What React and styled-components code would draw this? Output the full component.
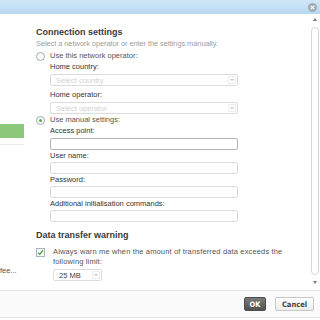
import styled, {createGlobalStyle} from "styled-components";

const GlobalStyle = createGlobalStyle`
    html, body {
        margin: 0;
        padding: 0;
        background: #ffffff;
    }
    * {
        box-sizing: border-box;
    }
`;

const Dialog = styled.div`
    width: 320px;
    height: 320px;
    overflow: hidden;
    display: flex;
    flex-direction: column;
    background: #ffffff;
    font-family: "Liberation Sans", Arial, sans-serif;
    font-size: 7.5px;
    color: #444;
`;

const TitleBar = styled.div`
    height: 14px;
    flex-shrink: 0;
    display: flex;
    align-items: center;
    justify-content: flex-end;
    padding-right: 3px;
    background: linear-gradient(to bottom, #cfe7f9, #b7d8f2);
`;

const CloseButton = styled.div`
    width: 9px;
    height: 9px;
    border-radius: 50%;
    background: #a3adb6;
    display: flex;
    align-items: center;
    justify-content: center;
`;

const Body = styled.div`
    flex: 1;
    display: flex;
    min-height: 0;
`;

const SidePanel = styled.div`
    width: 24px;
    flex-shrink: 0;
    display: flex;
    flex-direction: column;
    padding-top: 110px;
    padding-bottom: 15px;
`;

const SelectedItem = styled.div`
    height: 14px;
    background: #8cc97a;
`;

const SideDivider = styled.div`
    height: 1px;
    margin-top: 6px;
    background: #ececec;
`;

const SideText = styled.div`
    margin-top: auto;
    white-space: nowrap;
    overflow: hidden;
    color: #555;
`;

const Content = styled.div`
    flex: 1;
    padding: 11px 0 0 12px;
    display: flex;
    flex-direction: column;
`;

const Heading = styled.div`
    font-size: 9px;
    line-height: 14px;
    font-weight: 700;
    color: #3a3a3a;
    margin-top: ${props => props.gap || 0}px;
`;

const Hint = styled.div`
    line-height: 10px;
    color: #a0a0a0;
    letter-spacing: -0.1px;
`;

const Choice = styled.label`
    display: flex;
    align-items: center;
    gap: 5px;
    line-height: 10px;
    margin-top: ${props => props.gap || 0}px;
    color: #555;
`;

const Radio = styled.span`
    width: 9px;
    height: 9px;
    border-radius: 50%;
    border: 1px solid #9aa7b4;
    background: #fff;
    display: flex;
    align-items: center;
    justify-content: center;

    &::after {
        content: "";
        width: 3px;
        height: 3px;
        border-radius: 50%;
        background: ${props => props.checked ? '#4fae3c' : 'transparent'};
    }
`;

const Group = styled.div`
    padding-left: 14px;
    width: 202px;
    display: flex;
    flex-direction: column;
`;

const Label = styled.div`
    line-height: 10px;
    color: #333;
    margin-top: ${props => props.gap || 1}px;
`;

const Field = styled.div`
    height: 12px;
    margin-top: ${props => props.gap || 1}px;
    border: 1px solid ${props => props.focused ? '#b4b4b4' : '#dcdcdc'};
    border-radius: 2px;
    background: #fff;
    display: flex;
    align-items: center;
    padding: 0 1px 0 5px;
    color: ${props => props.muted ? '#d2d2d2' : '#444'};
    width: ${props => props.width || 'auto'};
`;

const FieldText = styled.span`
    flex: 1;
`;

const Arrow = styled.span`
    width: 8px;
    height: 8px;
    border: 1px solid #ececec;
    border-radius: 1px;
    display: flex;
    align-items: center;
    justify-content: center;

    &::after {
        content: "";
        border-left: 2px solid transparent;
        border-right: 2px solid transparent;
        border-top: 2px solid #c4c4c4;
    }
`;

const CheckRow = styled.div`
    display: flex;
    gap: 8px;
    margin-top: 5px;
    line-height: 10px;
    color: #555;
    letter-spacing: 0.15px;
`;

const CheckBox = styled.span`
    width: 9px;
    height: 9px;
    flex-shrink: 0;
    margin-top: 1px;
    border: 1px solid #a9b4be;
    background: #fff;
    display: flex;
    align-items: center;
    justify-content: center;
`;

const LimitRow = styled.div`
    padding-left: 17px;
    margin-top: 1px;
`;

const ScrollBar = styled.div`
    width: 11px;
    flex-shrink: 0;
    display: flex;
    flex-direction: column;
    align-items: center;
    padding: 2px 1px 4px 1px;
`;

const ScrollArrow = styled.span`
    width: 0;
    height: 0;
    margin: 2px 0;
    border-left: 2px solid transparent;
    border-right: 2px solid transparent;
    ${props => props.down
        ? 'border-top: 3px solid #777;'
        : 'border-bottom: 3px solid #777;'}
`;

const Thumb = styled.div`
    flex: 1;
    width: 8px;
    margin: 4px 0;
    border: 1px solid #d6d6d6;
    border-radius: 4px;
    background: #fff;
`;

const Footer = styled.div`
    height: 28px;
    flex-shrink: 0;
    border-top: 1px solid #e2e2e2;
    border-bottom: 1px solid #e2e2e2;
    background: #fbfbfb;
    display: flex;
    align-items: center;
    justify-content: flex-end;
    gap: 9px;
    padding: 0 6px 0 0;
    margin-bottom: 2px;
`;

const Button = styled.button`
    height: 14px;
    padding: 0;
    width: ${props => props.width}px;
    border-radius: 2px;
    font-family: "DejaVu Sans Condensed", "Liberation Sans", Arial, sans-serif;
    font-size: 7.5px;
    font-weight: 700;
    border: 1px solid ${props => props.primary ? '#4e4e4e' : '#c8c8c8'};
    color: ${props => props.primary ? '#ffffff' : '#444'};
    background: ${props => props.primary
        ? 'linear-gradient(to bottom, #7a7a7a, #505050)'
        : 'linear-gradient(to bottom, #ffffff, #ececec)'};
`;

const App = () => {
    return (
        <Dialog>
            <GlobalStyle/>
            <TitleBar>
                <CloseButton>
                    <svg width="5" height="5" viewBox="0 0 5 5">
                        <path d="M0.8 0.8 L4.2 4.2 M4.2 0.8 L0.8 4.2" stroke="#fff" strokeWidth="1.1"/>
                    </svg>
                </CloseButton>
            </TitleBar>

            <Body>
                <SidePanel>
                    <SelectedItem/>
                    <SideDivider/>
                    <SideText>fee...</SideText>
                </SidePanel>

                <Content>
                    <Heading>Connection settings</Heading>
                    <Hint>Select a network operator or enter the settings manually.</Hint>

                    <Choice gap={2}>
                        <Radio/>
                        Use this network operator:
                    </Choice>
                    <Group>
                        <Label>Home country:</Label>
                        <Field muted gap={2}>
                            <FieldText>Select country</FieldText>
                            <Arrow/>
                        </Field>
                        <Label gap={4}>Home operator:</Label>
                        <Field muted gap={2}>
                            <FieldText>Select operator</FieldText>
                            <Arrow/>
                        </Field>
                    </Group>

                    <Choice gap={1}>
                        <Radio checked/>
                        Use manual settings:
                    </Choice>
                    <Group>
                        <Label>Access point:</Label>
                        <Field focused gap={2}/>
                        <Label>User name:</Label>
                        <Field/>
                        <Label>Password:</Label>
                        <Field/>
                        <Label>Additional initialisation commands:</Label>
                        <Field/>
                    </Group>

                    <Heading gap={6}>Data transfer warning</Heading>
                    <CheckRow>
                        <CheckBox>
                            <svg width="7" height="7" viewBox="0 0 7 7">
                                <path d="M1 3.6 L2.8 5.4 L6 1.4" stroke="#3d9a2c" strokeWidth="1.3" fill="none"/>
                            </svg>
                        </CheckBox>
                        <span>Always warn me when the amount of transferred data exceeds the<br/>following limit:</span>
                    </CheckRow>
                    <LimitRow>
                        <Field width="49px">
                            <FieldText>25 MB</FieldText>
                            <Arrow/>
                        </Field>
                    </LimitRow>
                </Content>

                <ScrollBar>
                    <ScrollArrow/>
                    <Thumb/>
                    <ScrollArrow down/>
                </ScrollBar>
            </Body>

            <Footer>
                <Button primary width={22}>OK</Button>
                <Button width={39}>Cancel</Button>
            </Footer>
        </Dialog>
    );
};

export default App;
